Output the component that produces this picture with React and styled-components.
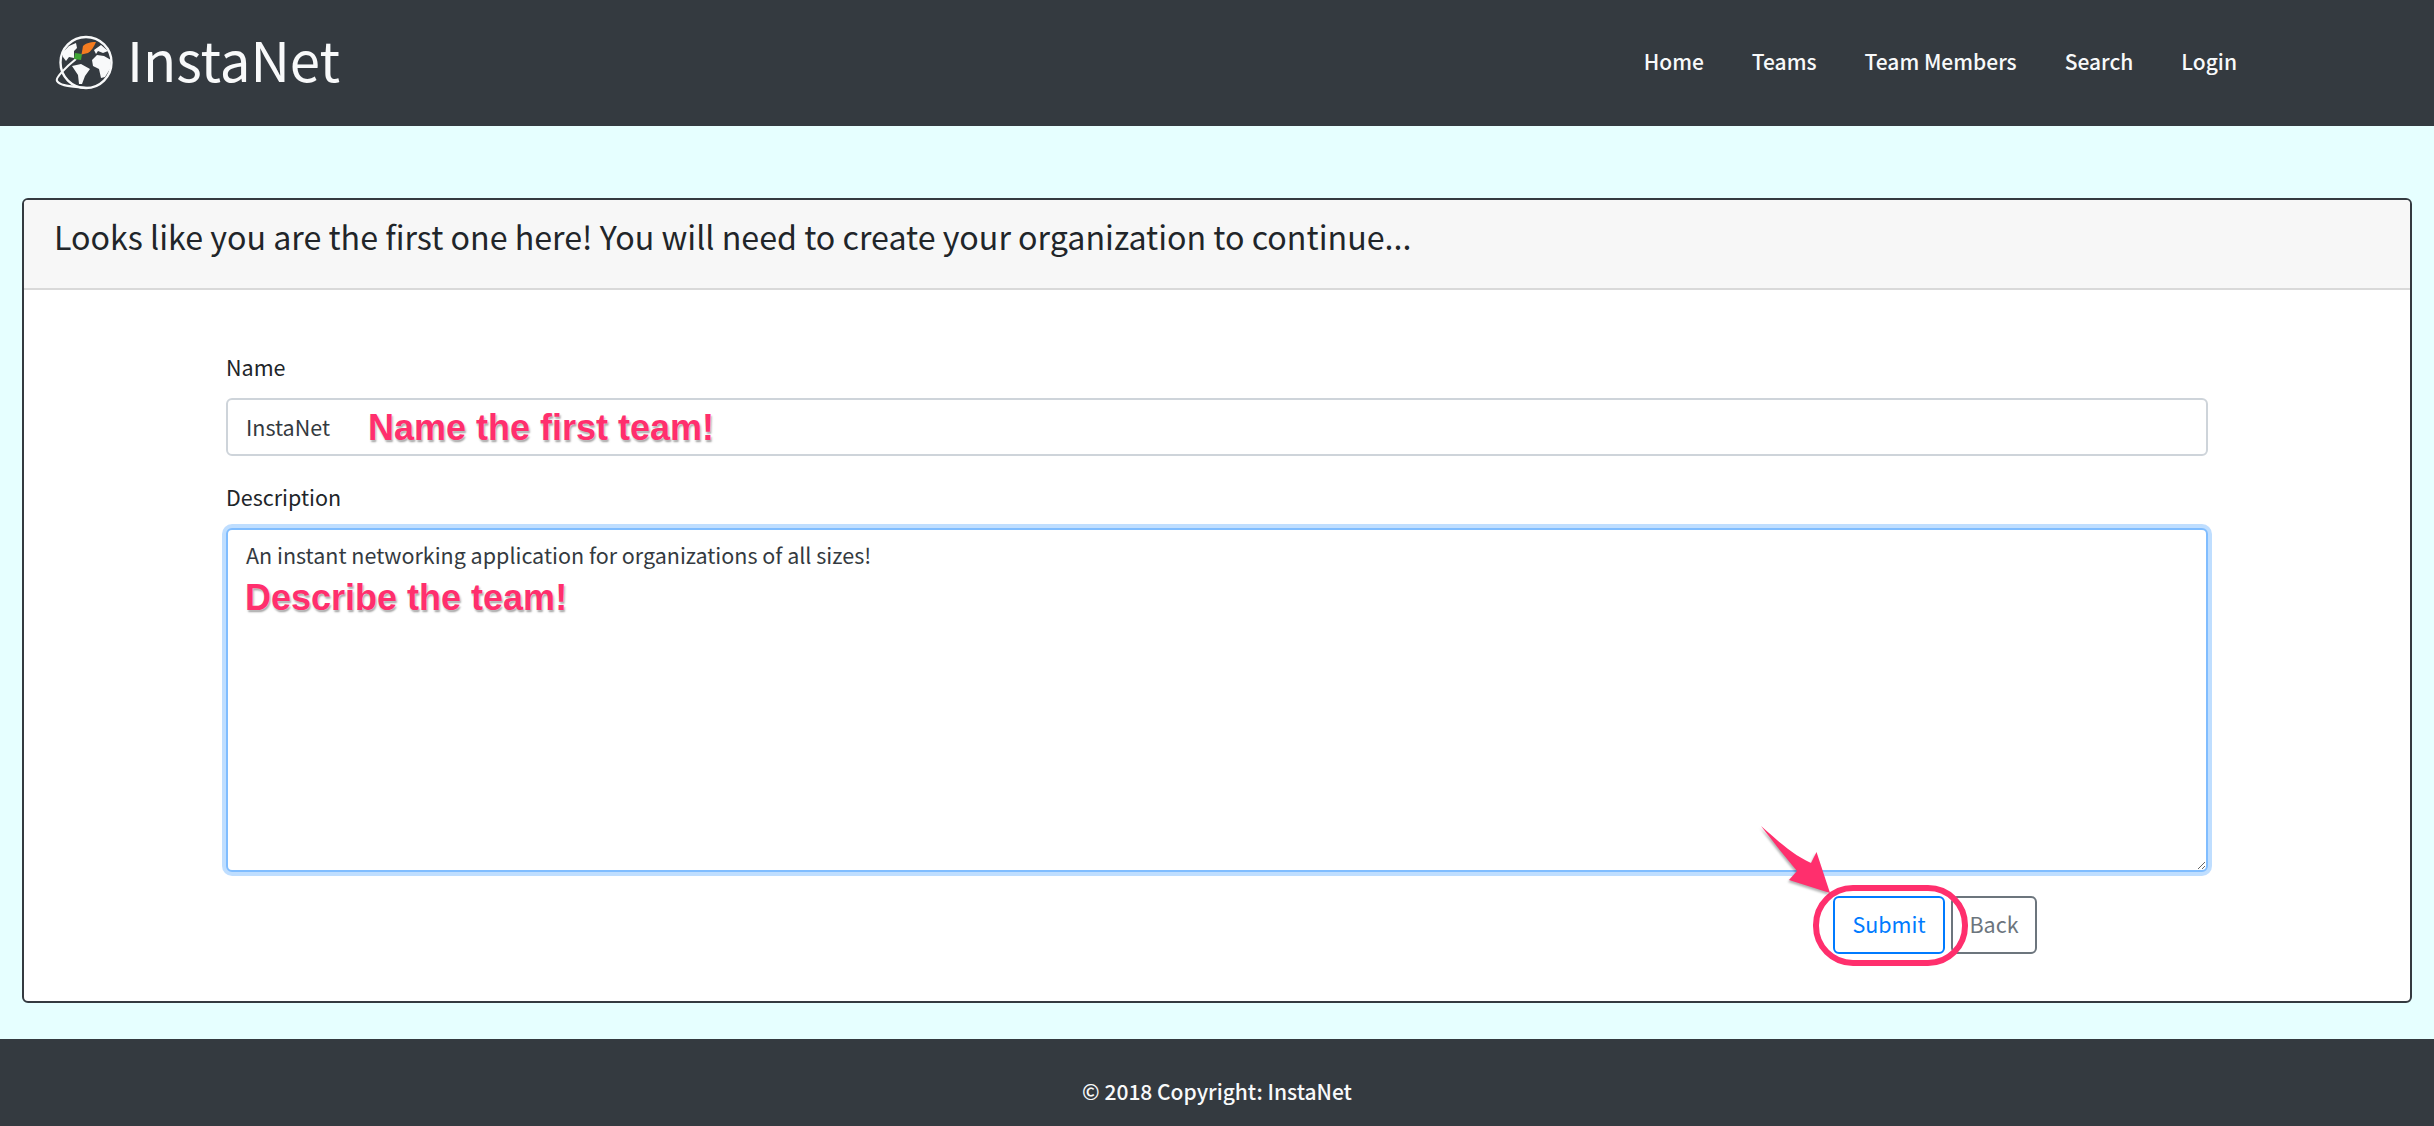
import styled, { createGlobalStyle } from "styled-components";

const fontStack = `"Noto Sans CJK SC", "Noto Sans", sans-serif`;

const GlobalStyle = createGlobalStyle`
    html, body {
        margin: 0;
        padding: 0;
        background-color: #e6ffff;
        font-family: ${fontStack};
    }
`;

const links = ["Home", "Teams", "Team Members", "Search", "Login"];

const Globe = () => (
    <svg width="62" height="62" viewBox="0 0 62 62">
        <circle cx="32" cy="31.5" r="25.5" fill="none" stroke="#f8f9fa" strokeWidth="2.4" />
        <path d="M9 21 L15 15 L22 12 L23 17 L20 20 L20 27 L15 26 L12 30 L9 26 Z" fill="#f8f9fa" />
        <path d="M18 35 L27 33 L36 38 L31 45 L28 53 L25 53 L24 44 Z" fill="#f8f9fa" />
        <path d="M38 29 L43 24 L50 25 L57 29 L56 38 L51 46 L47 47 L45 38 L39 35 Z" fill="#f8f9fa" />
        <path d="M40 19 L47 14 L54 20 L49 22 L44 20 L42 23 Z" fill="#f8f9fa" />
        <path d="M22 28 C12 36 1 47 3 50 C6 55 16 55 33 57" fill="none" stroke="#f8f9fa" strokeWidth="2.2" />
        <path d="M21 22 L28 23 L27 29 L20 28 Z" fill="#3fa535" />
        <path d="M42 11 C35 11 31 13 29 15 L27.5 23.5 L34 22 C37 20 40 16 42 11 Z" fill="#f47c20" />
    </svg>
);

export default function App() {
    return (
        <>
            <GlobalStyle />
            <Nav>
                <Brand>
                    <Globe />
                    <BrandName>InstaNet</BrandName>
                </Brand>
                <NavLinks>
                    {links.map((link) => (
                        <NavLink key={link}>{link}</NavLink>
                    ))}
                </NavLinks>
            </Nav>
            <Main>
                <Card>
                    <CardHeader>Looks like you are the first one here! You will need to create your organization to continue...</CardHeader>
                    <CardBody>
                        <Field>
                            <Label>Name</Label>
                            <InputWrapper>
                                <Input readOnly value="InstaNet" />
                                <NameNote>Name the first team!</NameNote>
                            </InputWrapper>
                        </Field>
                        <Field>
                            <Label>Description</Label>
                            <InputWrapper>
                                <TextArea readOnly value="An instant networking application for organizations of all sizes!" />
                                <DescribeNote>Describe the team!</DescribeNote>
                            </InputWrapper>
                        </Field>
                        <Buttons>
                            <SubmitWrapper>
                                <Button $color="#007bff">Submit</Button>
                                <Ring />
                                <Arrow width="84" height="80" viewBox="0 0 84 80">
                                    <path d="M1 2 C14 13 31 30 51 39 L56.5 28 L70 69 L29 56 L37 47 C25 33 11 15 1 2 Z" fill="#ff2f6d" />
                                </Arrow>
                            </SubmitWrapper>
                            <Button $color="#6c757d" $back>Back</Button>
                        </Buttons>
                    </CardBody>
                </Card>
            </Main>
            <Footer>© 2018 Copyright: InstaNet</Footer>
        </>
    );
}

const Nav = styled.nav`
    height: 126px;
    background-color: #343a40;
    display: flex;
    align-items: center;
    justify-content: space-between;
    padding: 0 197px 0 54px;
    box-sizing: border-box;
`;
const Brand = styled.div`
    display: flex;
    align-items: center;
    gap: 11px;
    margin-top: -3px;
`;
const BrandName = styled.div`
    color: #f8f9fa;
    font-size: 54.5px;
    line-height: 64px;
    margin-bottom: 6px;
`;
const NavLinks = styled.div`
    display: flex;
    gap: 48px;
    margin-top: -4px;
`;
const NavLink = styled.div`
    color: #f8f9fa;
    font-size: 21px;
    font-weight: 500;
    line-height: 32px;
`;
const Main = styled.main`
    padding: 72px 22px 36px;
`;
const Card = styled.section`
    background-color: white;
    border: 2px solid #343a40;
    border-radius: 6px;
    overflow: hidden;
`;
const CardHeader = styled.div`
    height: 88px;
    box-sizing: content-box;
    background-color: #f7f7f7;
    border-bottom: 2px solid #d9d9d9;
    padding-left: 30px;
    font-size: 32.2px;
    line-height: 72px;
    color: #212529;
`;
const CardBody = styled.div`
    padding: 61px 202px 47px;
`;
const Field = styled.div`
    margin-bottom: 25px;
`;
const Label = styled.div`
    font-size: 21.5px;
    line-height: 32px;
    color: #212529;
    margin-bottom: 15px;
`;
const InputWrapper = styled.div`
    position: relative;
`;
const Input = styled.input`
    display: block;
    width: 100%;
    height: 58px;
    box-sizing: border-box;
    padding: 0 18px 2px;
    border: 2px solid #ced4da;
    border-radius: 6px;
    background-color: white;
    font-family: ${fontStack};
    font-size: 21.5px;
    color: #343a40;
    &:focus {
        outline: none;
    }
`;
const TextArea = styled.textarea`
    display: block;
    width: 100%;
    height: 344px;
    box-sizing: border-box;
    padding: 9px 18px;
    border: 2px solid #80bdff;
    border-radius: 6px;
    background-color: white;
    box-shadow: 0 0 0 4px rgba(0, 123, 255, 0.25);
    font-family: ${fontStack};
    font-size: 21.5px;
    line-height: 32px;
    color: #343a40;
    outline: none;
`;
const Note = styled.div`
    position: absolute;
    color: #ff2f6d;
    font-family: "Liberation Sans", sans-serif;
    font-weight: bold;
    font-size: 36px;
    line-height: 40px;
    white-space: nowrap;
    text-shadow: 0 0 2px white, 1px 2px 2px rgba(0, 0, 0, 0.4);
`;
const NameNote = styled(Note)`
    left: 142px;
    top: 10px;
`;
const DescribeNote = styled(Note)`
    left: 19px;
    top: 50px;
`;
const Buttons = styled.div`
    display: flex;
    justify-content: flex-end;
    gap: 6px;
    padding-right: 171px;
    margin-top: -1px;
`;
const SubmitWrapper = styled.div`
    position: relative;
`;
const Button = styled.button`
    height: 58px;
    width: ${(props) => (props.$back ? "86px" : "112px")};
    box-sizing: border-box;
    padding: 0 0 3px;
    border: 2px solid ${(props) => props.$color};
    border-radius: 6px;
    background-color: white;
    color: ${(props) => props.$color};
    font-family: ${fontStack};
    font-size: 21.5px;
`;
const Ring = styled.div`
    position: absolute;
    left: -20px;
    top: -11px;
    width: 155px;
    height: 81px;
    box-sizing: border-box;
    border: 6px solid #ff2f6d;
    border-radius: 40px;
`;
const Arrow = styled.svg`
    position: absolute;
    left: -73px;
    top: -72px;
    filter: drop-shadow(-1px 2px 1px rgba(0, 0, 0, 0.3));
`;
const Footer = styled.footer`
    height: 88px;
    background-color: #343a40;
    color: #f8f9fa;
    font-size: 21px;
    font-weight: 500;
    text-align: center;
    line-height: 104px;
`;
